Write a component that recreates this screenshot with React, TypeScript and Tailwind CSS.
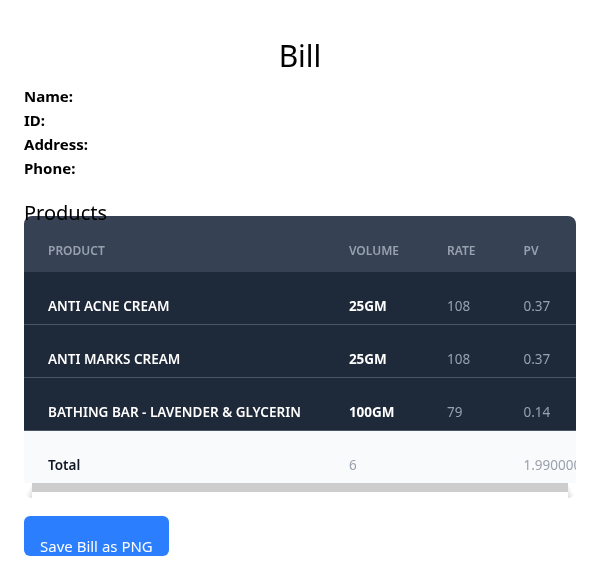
const products = [
  { name: "ANTI ACNE CREAM", volume: "25GM", rate: 108, pv: 0.37 },
  { name: "ANTI MARKS CREAM", volume: "25GM", rate: 108, pv: 0.37 },
  { name: "BATHING BAR - LAVENDER & GLYCERIN", volume: "100GM", rate: 79, pv: 0.14 },
];

export default function App() {
  return (
    <div className="min-h-screen bg-white px-6 pt-[38px] font-['Noto_Sans',sans-serif] text-black">
      <h1 className="mb-[10px] text-center text-3xl">Bill</h1>

      <div className="text-[15px] font-bold leading-6">
        <p>Name:</p>
        <p>ID:</p>
        <p>Address:</p>
        <p>Phone:</p>
      </div>

      <h2 className="mt-[19px] h-[17px] text-xl">Products</h2>

      <div className="rounded-lg">
        <div className="overflow-x-auto rounded-t-lg">
          <table className="w-full text-left text-[13.5px] leading-4">
            <thead className="bg-gray-700 text-xs uppercase text-gray-400">
              <tr>
                <th className="whitespace-nowrap px-6 pb-[13px] pt-[27px] font-semibold">Product</th>
                <th className="whitespace-nowrap px-6 pb-[13px] pt-[27px] font-semibold">Volume</th>
                <th className="whitespace-nowrap px-6 pb-[13px] pt-[27px] font-semibold">Rate</th>
                <th className="whitespace-nowrap px-6 pb-[13px] pt-[27px] font-semibold">PV</th>
              </tr>
            </thead>
            <tbody>
              {products.map((p) => (
                <tr key={p.name} className="border-b border-gray-600 bg-gray-800">
                  <td className="whitespace-nowrap px-6 pb-[10px] pt-[26px] font-semibold text-white">{p.name}</td>
                  <td className="whitespace-nowrap px-6 pb-[10px] pt-[26px] font-bold text-white">{p.volume}</td>
                  <td className="whitespace-nowrap px-6 pb-[10px] pt-[26px] text-gray-400">{p.rate}</td>
                  <td className="whitespace-nowrap px-6 pb-[10px] pt-[26px] text-gray-400">{p.pv}</td>
                </tr>
              ))}
            </tbody>
            <tfoot>
              <tr className="bg-gray-50">
                <td className="whitespace-nowrap px-6 pb-[10px] pt-[26px] font-semibold text-gray-900">Total</td>
                <td className="whitespace-nowrap px-6 pb-[10px] pt-[26px] text-gray-400">6</td>
                <td className="px-6 pb-[10px] pt-[26px]"></td>
                <td className="whitespace-nowrap px-6 pb-[10px] pt-[26px] text-gray-400">1.9900000000000002</td>
              </tr>
            </tfoot>
          </table>
        </div>
        {/* horizontal scrollbar */}
        <div className="flex h-[15px] items-start">
          <div className="h-[15px] w-2 rounded-bl-lg bg-gradient-to-br from-white from-50% to-[#dcdcdc]" />
          <div className="h-[9px] flex-1 bg-[#cdcdcd]" />
          <div className="h-[15px] w-2 rounded-br-lg bg-gradient-to-bl from-white from-50% to-[#dcdcdc]" />
        </div>
      </div>

      <button className="mt-[18px] h-10 rounded-md bg-blue-500 px-4 pt-[19px] text-[15px] leading-4 text-white">
        Save Bill as PNG
      </button>
    </div>
  );
}
